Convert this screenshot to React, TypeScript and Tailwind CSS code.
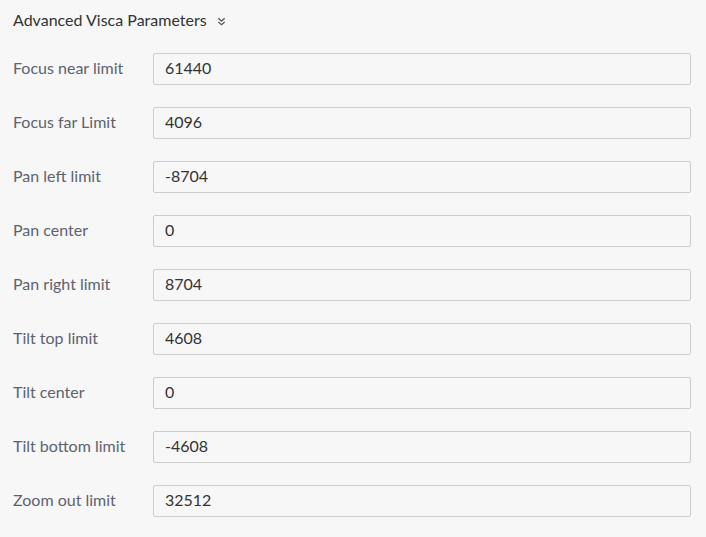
import React from 'react';

const params = [
  { label: 'Focus near limit', value: '61440' },
  { label: 'Focus far Limit', value: '4096' },
  { label: 'Pan left limit', value: '-8704' },
  { label: 'Pan center', value: '0' },
  { label: 'Pan right limit', value: '8704' },
  { label: 'Tilt top limit', value: '4608' },
  { label: 'Tilt center', value: '0' },
  { label: 'Tilt bottom limit', value: '-4608' },
  { label: 'Zoom out limit', value: '32512' },
];

const App: React.FC = () => {
  return (
    <div className="min-h-[537px] w-[706px] bg-[#f7f7f7] pl-[13px] pr-[15px] pt-[10px] font-['Lato',sans-serif]">
      {/* Header */}
      <div className="flex items-center h-[20px] text-[16px] text-[#333]">
        <span>Advanced Visca Parameters</span>
        <svg className="ml-[10px] mt-[2px]" width="9" height="9" viewBox="0 0 10 10" fill="none" stroke="#555" strokeWidth="1.4">
          <path d="M1.5 1.5 L5 4.5 L8.5 1.5" />
          <path d="M1.5 5.5 L5 8.5 L8.5 5.5" />
        </svg>
      </div>

      <div className="mt-[23px] flex flex-col gap-[22px]">
        {params.map((p) => (
          <div key={p.label} className="flex items-center">
            <label className="w-[140px] shrink-0 text-[16px] leading-[20px] text-[#5c6370] -mt-[2px]">{p.label}</label>
            <input
              readOnly
              value={p.value}
              className="h-[32px] w-[538px] border border-[#cccccc] bg-[#f7f7f7] px-[11px] pb-[3px] text-[16px] text-[#333] outline-none rounded-[2px]"
            />
          </div>
        ))}
      </div>
    </div>
  );
};

export default App;
